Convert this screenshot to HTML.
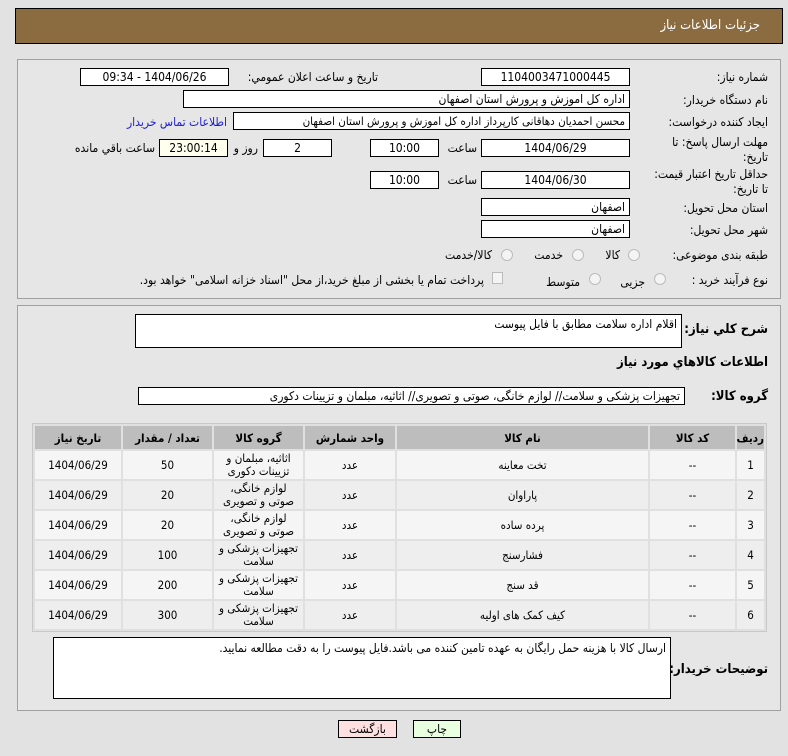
<!DOCTYPE html>
<html><head><meta charset="utf-8"><style>
*{box-sizing:border-box;margin:0;padding:0}
body{width:788px;height:756px;background:#e2e2e2;font-family:"DejaVu Sans Condensed","DejaVu Sans",sans-serif;font-size:12px;color:#000;position:relative;overflow:hidden;direction:rtl}
.a{position:absolute;white-space:nowrap}
.hdr{left:15px;top:8px;width:768px;height:36px;background:#8b6b40;border:1px solid #000;color:#fff;font-size:13px}
.hdr span{position:absolute;right:22px;top:9px}
.pan{position:absolute;left:17px;width:764px;border:1px solid #a0a0a0;background:#e6e6e6}
.in{position:absolute;height:18px;background:#fff;border:1px solid #000;font-size:12px;line-height:16px;padding:0 4px;text-align:right;white-space:nowrap;overflow:hidden}
.c{text-align:center}
.l{position:absolute;right:20px;white-space:nowrap}
.b{font-weight:bold;font-size:13px}
.rd{position:absolute;width:12px;height:12px;border:1px solid #bbb;border-radius:50%;background:#f4f4f4}
table{position:absolute;left:32px;top:423px;width:735px;border-collapse:separate;border-spacing:2px;background:#e0e0e0;border:1px solid #c8c8c8;font-size:11.5px;table-layout:fixed}
th{background:#bdbdbd;height:23px;font-weight:bold;padding:0;white-space:nowrap;overflow:hidden}
td{background:#f5f5f5;height:28px;text-align:center;line-height:13px;padding:0;white-space:nowrap;overflow:hidden}
tr:nth-child(odd) td{background:#eeeeee}
.btn{position:absolute;top:720px;height:18px;border:1px solid #000;font-size:12px;text-align:center;line-height:16px}
</style></head><body>
<div class="a hdr"><span>جزئیات اطلاعات نیاز</span></div>
<div class="pan" style="top:59px;height:240px"></div>
<div class="pan" style="top:305px;height:406px"></div>

<div class="l" style="top:70px">شماره نیاز:</div>
<div class="in c" style="left:481px;top:68px;width:149px">1104003471000445</div>
<div class="a" style="right:410px;top:70px">تاریخ و ساعت اعلان عمومي:</div>
<div class="in c" style="left:80px;top:68px;width:149px">1404/06/26 - 09:34</div>

<div class="l" style="top:93px">نام دستگاه خریدار:</div>
<div class="in" style="left:183px;top:90px;width:447px">اداره کل اموزش و پرورش استان اصفهان</div>

<div class="l" style="top:115px">ایجاد کننده درخواست:</div>
<div class="in" style="left:233px;top:112px;width:397px;font-size:11.5px">محسن احمدیان دهاقانی کارپرداز اداره کل اموزش و پرورش استان اصفهان</div>
<div class="a" style="right:561px;top:115px;color:#2020d0">اطلاعات تماس خریدار</div>

<div class="l" style="top:135px;line-height:15px">مهلت ارسال پاسخ: تا<br>تاریخ:</div>
<div class="in c" style="left:481px;top:139px;width:149px">1404/06/29</div>
<div class="a" style="right:311px;top:141px">ساعت</div>
<div class="in c" style="left:370px;top:139px;width:69px">10:00</div>
<div class="in c" style="left:263px;top:139px;width:69px">2</div>
<div class="a" style="right:530px;top:141px">روز و</div>
<div class="in c" style="left:159px;top:139px;width:69px;background:#ffffee">23:00:14</div>
<div class="a" style="right:633px;top:141px">ساعت باقي مانده</div>

<div class="l" style="top:167px;line-height:15px">حداقل تاریخ اعتبار قیمت:<br>تا تاریخ:</div>
<div class="in c" style="left:481px;top:171px;width:149px">1404/06/30</div>
<div class="a" style="right:311px;top:173px">ساعت</div>
<div class="in c" style="left:370px;top:171px;width:69px">10:00</div>

<div class="l" style="top:201px">استان محل تحویل:</div>
<div class="in" style="left:481px;top:198px;width:149px">اصفهان</div>
<div class="l" style="top:223px">شهر محل تحویل:</div>
<div class="in" style="left:481px;top:220px;width:149px">اصفهان</div>

<div class="l" style="top:248px">طبقه بندی موضوعی:</div>
<div class="rd" style="left:628px;top:249px"></div><div class="a" style="right:168px;top:248px">کالا</div>
<div class="rd" style="left:572px;top:249px"></div><div class="a" style="right:225px;top:248px">خدمت</div>
<div class="rd" style="left:501px;top:249px"></div><div class="a" style="right:296px;top:248px">کالا/خدمت</div>

<div class="l" style="top:273px">نوع فرآیند خرید :</div>
<div class="rd" style="left:654px;top:273px"></div><div class="a" style="right:143px;top:275px">جزیی</div>
<div class="rd" style="left:589px;top:273px"></div><div class="a" style="right:208px;top:275px">متوسط</div>
<div class="a" style="left:492px;top:272px;width:11px;height:12px;border:1px solid #bbb;background:#f4f4f4"></div>
<div class="a" style="right:304px;top:273px">پرداخت تمام یا بخشی از مبلغ خرید،از محل "اسناد خزانه اسلامی" خواهد بود.</div>

<div class="l b" style="top:322px">شرح کلي نياز:</div>
<div class="in" style="left:135px;top:314px;width:547px;height:34px;line-height:18px">اقلام اداره سلامت مطابق با فایل پیوست</div>
<div class="l b" style="top:355px">اطلاعات کالاهاي مورد نياز</div>
<div class="l b" style="top:389px">گروه کالا:</div>
<div class="in" style="left:138px;top:387px;width:547px">تجهیزات پزشکی و سلامت// لوازم خانگی، صوتی و تصویری// اثاثیه، مبلمان و تزیینات دکوری</div>

<table>
<colgroup><col style="width:27px"><col style="width:85px"><col style="width:251px"><col style="width:90px"><col style="width:89px"><col style="width:89px"><col></colgroup>
<tr><th>ردیف</th><th>کد کالا</th><th>نام کالا</th><th>واحد شمارش</th><th>گروه کالا</th><th>تعداد / مقدار</th><th>تاریخ نیاز</th></tr>
<tr><td>1</td><td>--</td><td>تخت معاینه</td><td>عدد</td><td>اثاثیه، مبلمان و<br>تزیینات دکوری</td><td>50</td><td>1404/06/29</td></tr>
<tr><td>2</td><td>--</td><td>پاراوان</td><td>عدد</td><td>لوازم خانگی،<br>صوتی و تصویری</td><td>20</td><td>1404/06/29</td></tr>
<tr><td>3</td><td>--</td><td>پرده ساده</td><td>عدد</td><td>لوازم خانگی،<br>صوتی و تصویری</td><td>20</td><td>1404/06/29</td></tr>
<tr><td>4</td><td>--</td><td>فشارسنج</td><td>عدد</td><td>تجهیزات پزشکی و<br>سلامت</td><td>100</td><td>1404/06/29</td></tr>
<tr><td>5</td><td>--</td><td>قد سنج</td><td>عدد</td><td>تجهیزات پزشکی و<br>سلامت</td><td>200</td><td>1404/06/29</td></tr>
<tr><td>6</td><td>--</td><td>کیف کمک های اولیه</td><td>عدد</td><td>تجهیزات پزشکی و<br>سلامت</td><td>300</td><td>1404/06/29</td></tr>
</table>

<div class="l b" style="top:662px">توضیحات خریدار:</div>
<div class="in" style="left:53px;top:637px;width:618px;height:62px;line-height:20px">ارسال کالا با هزینه حمل رایگان به عهده تامین کننده می باشد.فایل پیوست را به دقت مطالعه نمایید.</div>

<div class="btn" style="left:338px;width:59px;background:#ffe0e0">بازگشت</div>
<div class="btn" style="left:413px;width:48px;background:#e8ffe0">چاپ</div>
</body></html>
